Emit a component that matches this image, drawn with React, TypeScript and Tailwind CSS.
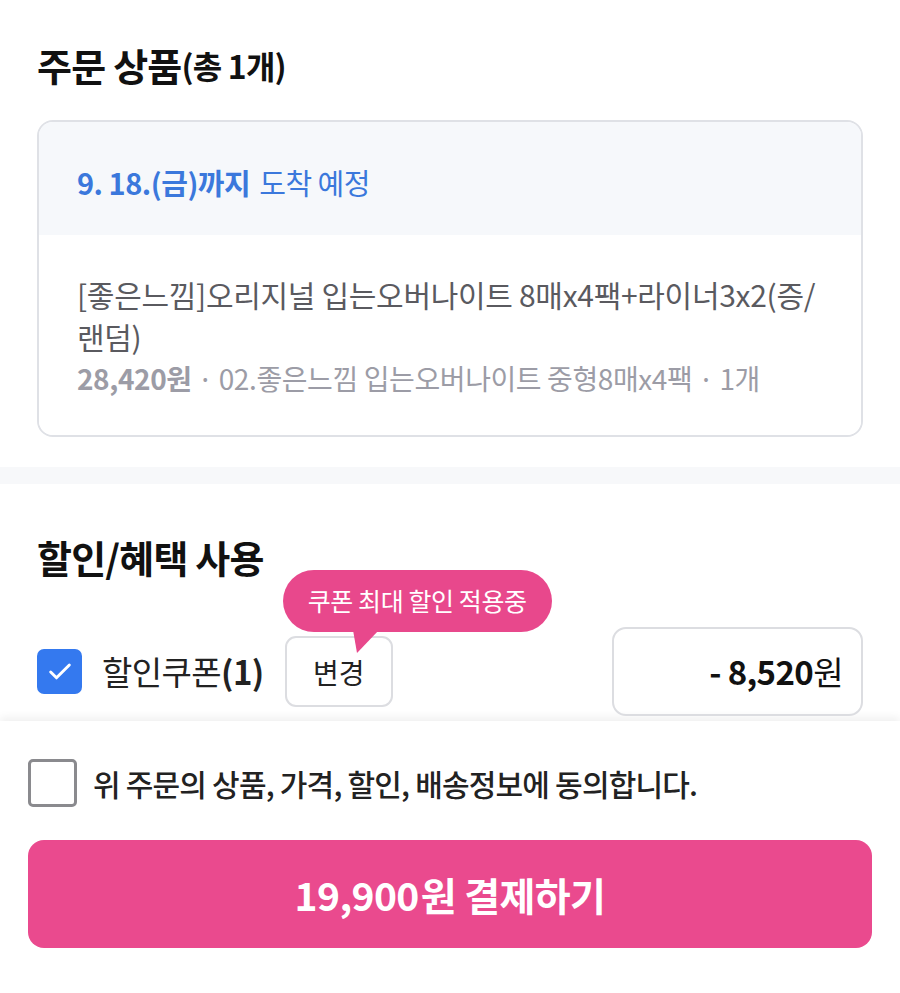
import { Check } from "lucide-react";

const font = { fontFamily: '"Noto Sans CJK KR", "Noto Sans", sans-serif' };

function OrderItems(): React.JSX.Element {
  return (
    <section className="px-[37px] pt-[43px] pb-[30px]">
      <h2 className="flex h-[44px] items-center text-[38px] font-bold leading-[44px] tracking-[-0.8px] text-[#111]">
        주문 상품<span className="text-[32px]">(총 1개)</span>
      </h2>
      <div className="mt-[33px] overflow-hidden rounded-[16px] border-2 border-[#dfe1e6]">
        <div className="flex h-[113px] items-center bg-[#f6f8fb] px-[38px] pt-[8px] text-[29px] tracking-[-0.5px] text-[#3b78dc]">
          <span className="font-bold">9. 18.(금)까지</span>
          <span className="ml-[9px]">도착 예정</span>
        </div>
        <div className="bg-white px-[38px] pt-[38px] pb-[36px] text-[30px] leading-[42px] tracking-[-0.3px]">
          <p className="text-[#5a5a5f]">
            [좋은느낌]오리지널 입는오버나이트 8매x4팩+라이너3x2(증/
            <br />
            랜덤)
          </p>
          <p className="text-[28px] tracking-[-0.4px] text-[#9c9ca6]">
            <span className="font-bold">28,420원</span> · 02.좋은느낌 입는오버나이트 중형8매x4팩 · 1개
          </p>
        </div>
      </div>
    </section>
  );
}

function Benefits(): React.JSX.Element {
  return (
    <section className="px-[37px] pt-[51px]">
      <h2 className="h-[44px] text-[38px] font-bold leading-[44px] tracking-[-0.8px] text-[#111]">할인/혜택 사용</h2>
      <div className="mt-[48px] flex items-center">
        <div className="flex h-[45px] w-[45px] items-center justify-center rounded-[7px] bg-[#3479ef]">
          <Check className="h-[28px] w-[28px] text-white" strokeWidth={2.5} />
        </div>
        <span className="ml-[20px] text-[33px] tracking-[-0.6px] text-[#222]">
          할인쿠폰<span className="font-bold">(1)</span>
        </span>
        <div className="relative ml-[21px]">
          <div className="absolute bottom-[75px] left-[-2px] z-10">
            <div className="flex h-[62px] items-center whitespace-nowrap rounded-full bg-[#e8488c] px-[25px] text-[25px] tracking-[-0.4px] text-white">
              쿠폰 최대 할인 적용중
            </div>
            <svg className="absolute left-[70px] top-[60px]" width="26" height="24" viewBox="0 0 26 24">
              <polygon points="0,0 26,0 4,23" fill="#e8488c" />
            </svg>
          </div>
          <button className="flex h-[71px] w-[108px] items-center justify-center rounded-[11px] border-2 border-[#dcdde1] bg-white text-[28px] text-[#222]">
            변경
          </button>
        </div>
        <div className="ml-auto flex h-[89px] w-[251px] items-center justify-end rounded-[14px] border-2 border-[#dcdde1] px-[18px] text-[33px] tracking-[-0.6px] text-[#111]">
          <span className="font-bold">- 8,520</span>
          <span>원</span>
        </div>
      </div>
    </section>
  );
}

function BottomSheet(): React.JSX.Element {
  return (
    <div className="mt-[5px] bg-white px-[28px] pt-[38px] pb-[45px] shadow-[0_-4px_8px_rgba(0,0,0,0.06)]">
      <label className="flex items-center">
        <span className="h-[48px] w-[49px] rounded-[5px] border-[3px] border-[#8a8a8e] bg-white" />
        <span className="ml-[16px] text-[30px] font-medium tracking-[-0.8px] text-[#222]">
          위 주문의 상품, 가격, 할인, 배송정보에 동의합니다.
        </span>
      </label>
      <button className="mt-[33px] flex h-[108px] w-full items-center justify-center rounded-[16px] bg-[#ea4a8e] text-[39px] tracking-[-0.6px] text-white">
        <span className="font-bold">19,900</span>
        <span className="ml-[2px] font-semibold">원 결제하기</span>
      </button>
    </div>
  );
}

export default function App(): React.JSX.Element {
  return (
    <div className="min-h-[993px] w-[900px] bg-white" style={font}>
      <OrderItems />
      <div className="h-[17px] bg-[#f7f8fa]" />
      <Benefits />
      <BottomSheet />
    </div>
  );
}
